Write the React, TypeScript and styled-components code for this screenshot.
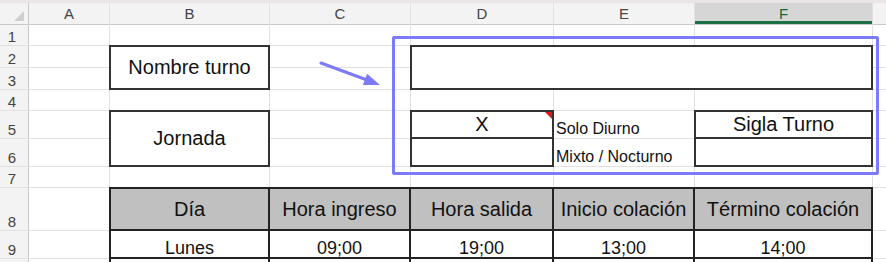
import React from "react";
import styled, { createGlobalStyle } from "styled-components";

const Global = createGlobalStyle`
  html, body { margin: 0; padding: 0; background: #ffffff; }
  body { font-family: "Liberation Sans", Arial, sans-serif; overflow: hidden; }
`;

const Page = styled.div`
  position: relative;
  width: 886px;
  height: 262px;
  overflow: hidden;
  background: #ffffff;
`;

const TopStrip = styled.div`
  height: 3px;
  background: #e9e5e5;
`;

const Sheet = styled.div`
  display: grid;
  grid-template-columns: 28px 80px 159px 140px 142px 140px 177px 1fr;
  grid-template-rows: 21px 20px 21px 21px 20px 27px 27px 20px 42px 27px 27px;
  gap: 1px;
  background: #e1e1e1;
`;

const Corner = styled.div`
  background: #f3f3f3;
  display: flex;
  align-items: flex-end;
  justify-content: flex-end;
  padding: 0 4px 3px 0;
  box-shadow: 1px 0 0 #c9c9c9, 0 1px 0 #c9c9c9;
`;

const ColHeader = styled.div<{ $selected?: boolean }>`
  background: ${(p) => (p.$selected ? "#d6d6d6" : "#f3f3f3")};
  color: ${(p) => (p.$selected ? "#0e6a3c" : "#444444")};
  font-size: 15px;
  display: flex;
  align-items: center;
  justify-content: center;
  box-shadow: ${(p) =>
    p.$selected ? "inset 0 -3px 0 #1d7044, 0 1px 0 #c9c9c9" : "0 1px 0 #c9c9c9"};
`;

const RowHeader = styled.div<{ $row: number }>`
  grid-column: 1;
  grid-row: ${(p) => p.$row};
  background: #f3f3f3;
  color: #444444;
  font-size: 15px;
  display: flex;
  align-items: flex-end;
  justify-content: center;
  padding-right: 4px;
  box-shadow: 1px 0 0 #c9c9c9;
`;

const Cell = styled.div<{ $col: number; $row: number }>`
  grid-column: ${(p) => p.$col};
  grid-row: ${(p) => p.$row};
  background: #ffffff;
`;

const Box = styled.div<{ $col: string; $row: string }>`
  grid-column: ${(p) => p.$col};
  grid-row: ${(p) => p.$row};
  margin: -1px;
  border: 2px solid #333333;
  background: #ffffff;
  display: flex;
  align-items: center;
  justify-content: center;
  font-size: 20px;
  color: #111111;
  position: relative;
  z-index: 1;
`;

const StackBox = styled.div<{ $col: string; $row: string }>`
  grid-column: ${(p) => p.$col};
  grid-row: ${(p) => p.$row};
  margin: -1px;
  border: 2px solid #333333;
  background: #ffffff;
  display: grid;
  grid-template-rows: 1fr 1fr;
  position: relative;
  z-index: 1;
`;

const StackCell = styled.div<{ $divider?: boolean }>`
  position: relative;
  display: flex;
  align-items: center;
  justify-content: center;
  font-size: 20px;
  color: #111111;
  border-bottom: ${(p) => (p.$divider ? "2px solid #333333" : "none")};
`;

const CommentMark = styled.span`
  position: absolute;
  top: 0;
  right: 0;
  width: 0;
  height: 0;
  border-top: 7px solid #e8141a;
  border-left: 7px solid transparent;
`;

const Label = styled.div<{ $col: number; $row: number }>`
  grid-column: ${(p) => p.$col};
  grid-row: ${(p) => p.$row};
  background: #ffffff;
  display: flex;
  align-items: flex-end;
  padding-left: 2px;
  font-size: 16px;
  color: #111111;
  white-space: nowrap;
  position: relative;
  z-index: 2;
`;

const TableCell = styled.div<{ $head?: boolean; $firstCol?: boolean; $firstRow?: boolean }>`
  background: ${(p) => (p.$head ? "#c0c0c0" : "#ffffff")};
  margin: ${(p) => (p.$firstRow ? "-1px" : "0")} -1px -1px ${(p) => (p.$firstCol ? "-1px" : "0")};
  border-right: 2px solid #222222;
  border-bottom: 2px solid #222222;
  border-top: ${(p) => (p.$firstRow ? "2px solid #222222" : "none")};
  border-left: ${(p) => (p.$firstCol ? "2px solid #222222" : "none")};
  display: flex;
  align-items: ${(p) => (p.$head ? "center" : "flex-end")};
  justify-content: center;
  font-size: ${(p) => (p.$head ? "20px" : "18px")};
  line-height: ${(p) => (p.$head ? "normal" : "1")};
  color: #111111;
  white-space: nowrap;
  position: relative;
  z-index: 1;
`;

const Frame = styled.div`
  position: absolute;
  left: 392px;
  top: 36px;
  width: 481px;
  height: 133px;
  border: 3px solid #7b7bfb;
  border-radius: 2px;
  pointer-events: none;
  z-index: 5;
`;

const ArrowSvg = styled.svg`
  position: absolute;
  left: 315px;
  top: 55px;
  z-index: 5;
`;

const cols = ["A", "B", "C", "D", "E", "F", "G"];

const headers = ["Día", "Hora ingreso", "Hora salida", "Inicio colación", "Término colación"];
const monday = ["Lunes", "09;00", "19;00", "13;00", "14;00"];

function Blanks({ row, columns }: { row: number; columns: number[] }) {
  return (
    <>
      {columns.map((c) => (
        <Cell key={`b${row}-${c}`} $col={c} $row={row} />
      ))}
    </>
  );
}

export default function App() {
  return (
    <Page>
      <Global />
      <TopStrip />
      <Sheet>
        <Corner>
          <svg width="10" height="10" viewBox="0 0 10 10">
            <polygon points="10,0 10,10 0,10" fill="#cfcfcf" />
          </svg>
        </Corner>
        {cols.map((c) => (
          <ColHeader key={c} $selected={c === "F"}>
            {c === "G" ? "" : c}
          </ColHeader>
        ))}

        {/* Row 1 */}
        <RowHeader $row={2}>1</RowHeader>
        <Blanks row={2} columns={[2, 3, 4, 5, 6, 7, 8]} />

        {/* Rows 2-3 */}
        <RowHeader $row={3}>2</RowHeader>
        <RowHeader $row={4}>3</RowHeader>
        <Blanks row={3} columns={[2, 4, 8]} />
        <Blanks row={4} columns={[2, 4, 8]} />
        <Box $col="3" $row="3 / 5">Nombre turno</Box>
        <Box $col="5 / 8" $row="3 / 5" />

        {/* Row 4 */}
        <RowHeader $row={5}>4</RowHeader>
        <Blanks row={5} columns={[2, 3, 4, 5, 6, 7, 8]} />

        {/* Rows 5-6 */}
        <RowHeader $row={6}>5</RowHeader>
        <RowHeader $row={7}>6</RowHeader>
        <Blanks row={6} columns={[2, 4, 8]} />
        <Blanks row={7} columns={[2, 4, 8]} />
        <Box $col="3" $row="6 / 8">Jornada</Box>
        <StackBox $col="5" $row="6 / 8">
          <StackCell $divider>
            X
            <CommentMark />
          </StackCell>
          <StackCell />
        </StackBox>
        <Label $col={6} $row={6}>Solo Diurno</Label>
        <Label $col={6} $row={7}>Mixto / Nocturno</Label>
        <StackBox $col="7" $row="6 / 8">
          <StackCell $divider>Sigla Turno</StackCell>
          <StackCell />
        </StackBox>

        {/* Row 7 */}
        <RowHeader $row={8}>7</RowHeader>
        <Blanks row={8} columns={[2, 3, 4, 5, 6, 7, 8]} />

        {/* Row 8: table head */}
        <RowHeader $row={9}>8</RowHeader>
        <Cell $col={2} $row={9} />
        {headers.map((h, i) => (
          <TableCell key={h} $head $firstRow $firstCol={i === 0}>
            {h}
          </TableCell>
        ))}
        <Cell $col={8} $row={9} />

        {/* Row 9 */}
        <RowHeader $row={10}>9</RowHeader>
        <Cell $col={2} $row={10} />
        {monday.map((v, i) => (
          <TableCell key={`m${i}`} $firstCol={i === 0}>
            {v}
          </TableCell>
        ))}
        <Cell $col={8} $row={10} />

        {/* Row 10 (cut by the window edge) */}
        <RowHeader $row={11} />
        <Cell $col={2} $row={11} />
        {monday.map((_, i) => (
          <TableCell key={`t${i}`} $firstCol={i === 0} />
        ))}
        <Cell $col={8} $row={11} />
      </Sheet>

      <Frame />
      <ArrowSvg width="70" height="36" viewBox="0 0 70 36">
        <line x1="6" y1="8" x2="52" y2="25" stroke="#7b7bfb" strokeWidth="3" strokeLinecap="round" />
        <polygon points="65,30 52.1,18.8 47.9,30" fill="#7b7bfb" />
      </ArrowSvg>
    </Page>
  );
}
